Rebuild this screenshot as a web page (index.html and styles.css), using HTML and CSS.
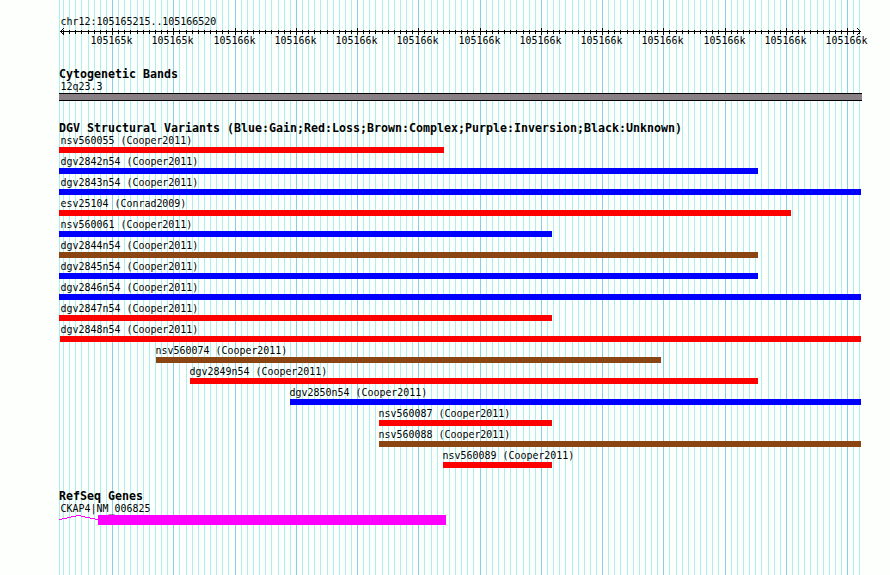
FILE: index.html
```html
<!DOCTYPE html>
<html lang="en">
<head>
  <meta charset="UTF-8">
  <title>chr12:105165215..105166520</title>
  <link rel="stylesheet" href="styles.css">
</head>
<body>
  <div class="panel">
    <!-- Vertical grid -->
    <svg class="grid" id="grid" width="890" height="575" shape-rendering="crispEdges"></svg>

    <!-- Ruler -->
    <div class="region label">chr12:105165215..105166520</div>
    <svg class="ruler" id="ruler" width="890" height="22" shape-rendering="crispEdges"></svg>

    <!-- Cytogenetic bands -->
    <div class="track cyto">
      <h2>Cytogenetic Bands</h2>
      <div class="label">12q23.3</div>
      <div class="band"></div>
    </div>

    <!-- Structural variants -->
    <div class="track variants">
      <h2>DGV Structural Variants (Blue:Gain;Red:Loss;Brown:Complex;Purple:Inversion;Black:Unknown)</h2>
      <div id="variants"></div>
    </div>

    <!-- Genes -->
    <div class="track genes">
      <h2>RefSeq Genes</h2>
      <div class="label gene-name">CKAP4|NM_006825</div>
      <div class="gene">
        <svg width="39" height="10" shape-rendering="crispEdges">
          <path d="M0 4.5H3M3 3.5H8M8 2.5H12M12 1.5H17M17 .5H22M22 1.5H26M26 2.5H31M31 3.5H36M36 4.5H39" stroke="#ff00ff" fill="none"/>
        </svg>
        <div class="exon"></div>
      </div>
    </div>
  </div>

  <script>
    const variants = [
      ["nsv560055 (Cooper2011)", 59, 444, "loss"],
      ["dgv2842n54 (Cooper2011)", 59, 758, "gain"],
      ["dgv2843n54 (Cooper2011)", 59, 861, "gain"],
      ["esv25104 (Conrad2009)", 59, 791, "loss"],
      ["nsv560061 (Cooper2011)", 59, 552, "gain"],
      ["dgv2844n54 (Cooper2011)", 59, 758, "complex"],
      ["dgv2845n54 (Cooper2011)", 59, 758, "gain"],
      ["dgv2846n54 (Cooper2011)", 59, 861, "gain"],
      ["dgv2847n54 (Cooper2011)", 59, 552, "loss"],
      ["dgv2848n54 (Cooper2011)", 60, 861, "loss"],
      ["nsv560074 (Cooper2011)", 156, 661, "complex"],
      ["dgv2849n54 (Cooper2011)", 190, 758, "loss"],
      ["dgv2850n54 (Cooper2011)", 290, 861, "gain"],
      ["nsv560087 (Cooper2011)", 379, 552, "loss"],
      ["nsv560088 (Cooper2011)", 379, 861, "complex"],
      ["nsv560089 (Cooper2011)", 443, 552, "loss"]
    ];

    document.getElementById("variants").innerHTML = variants.map(([name, start, end, type]) => `
      <div class="variant">
        <div class="label" style="margin-left:${Math.max(start - 0.5, 60.5)}px">${name}</div>
        <div class="bar ${type}" style="margin-left:${start}px;width:${end - start}px"></div>
      </div>`).join("");

    // Ticks are 6px apart, with an extra pixel where the scale rounds up
    const wide = [-4, 4, 12, 20, 27, 35, 44, 52, 60, 67, 75, 84, 92, 100, 107, 115];
    let grid = '<rect class="minor" x="59" y="0" width="1" height="575"/>';
    let ruler = '<path class="axis" d="M60 9.5H861M60.5 9v1M61.5 8v3M62.5 7v1M62.5 11v1M63.5 6v1M63.5 12v1M860.5 9v1M859.5 8v1M859.5 10v1M858.5 7v1M858.5 11v1M857.5 6v1M857.5 12v1"/>';
    let x = 63;
    for (let k = -8; k <= 122; k++) {
      if (k > -8) x += wide.includes(k) ? 7 : 6;
      const major = k % 10 === 0 && k >= 0;
      grid += `<rect class="${major ? "major" : "minor"}" x="${x}" y="0" width="1" height="575"/>`;
      ruler += major
        ? `<rect x="${x}" y="6" width="1" height="7"/><text x="${x - 21.5}" y="22">${k < 20 ? "105165k" : "105166k"}</text>`
        : `<rect x="${x}" y="8" width="1" height="4"/>`;
    }
    document.getElementById("grid").innerHTML = grid;
    document.getElementById("ruler").innerHTML = ruler;
  </script>
</body>
</html>
```
FILE: styles.css
```css
body {
  margin: 0;
  background-color: #fdfffc;
  color: #000;
  font-family: "DejaVu Sans Mono", monospace;
}

.panel {
  position: relative;
  width: 890px;
  height: 575px;
  overflow: hidden;
}

/* Grid behind the tracks */
.grid {
  position: absolute;
  top: 0;
  left: 0;
  z-index: -1;
}

.minor {
  fill: #afeeee;
}

.major {
  fill: #87ceeb;
}

/* Text */
.label {
  margin-left: 60.5px;
  font-size: 9.966px;
  line-height: 13px;
  height: 13px;
  white-space: nowrap;
}

h2 {
  margin: 0 0 0 59px;
  font-size: 11.64px;
  line-height: 14px;
  height: 13px;
  font-weight: bold;
  white-space: nowrap;
}

/* Ruler */
.region {
  padding-top: 15px;
}

.ruler {
  display: block;
  margin-top: -6px;
  overflow: visible;
  font-size: 9.966px;
}

.axis {
  stroke: #000;
  fill: none;
}

/* Cytogenetic bands */
.cyto {
  padding-top: 23px;
}

.band {
  box-sizing: border-box;
  margin-left: 59px;
  width: 803px;
  height: 8px;
  background-color: #888085;
  border: solid #000;
  border-width: 1px 0;
}

/* Structural variants */
.variants {
  padding-top: 20px;
}

.variant {
  height: 21px;
}

.bar {
  height: 6px;
}

.gain {
  background-color: #0000ff;
}

.loss {
  background-color: #ff0000;
}

.complex {
  background-color: #8b4513;
}

/* Genes */
.genes {
  padding-top: 19px;
}

/* keeps the underscore above the exon */
.gene-name {
  position: relative;
  z-index: 1;
}

.gene {
  display: flex;
  margin-left: 59px;
}

.exon {
  width: 348px;
  height: 10px;
  background-color: #ff00ff;
}
```
